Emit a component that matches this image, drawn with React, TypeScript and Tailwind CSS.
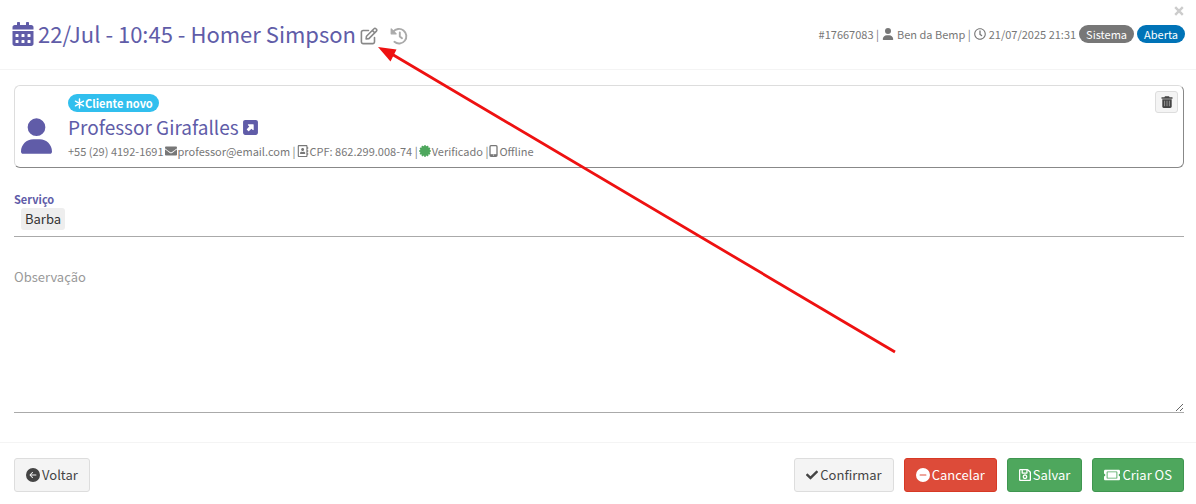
import { useState } from "react";
import {
  FaCalendarAlt,
  FaCheck,
  FaEnvelope,
  FaRegAddressBook,
  FaRegClock,
  FaRegSave,
  FaTicketAlt,
} from "react-icons/fa";
import { FaSquareUpRight, FaUser } from "react-icons/fa6";
import { BsArrowLeftCircleFill, BsDashCircleFill } from "react-icons/bs";

const BUTTON_STYLES = {
  default: "border-[#ddd] bg-[#f4f4f4] text-[#444]",
  danger: "border-[#d73925] bg-[#dd4b39] text-white",
  success: "border-[#3f9650] bg-[#4ea75d] text-white",
};

// ângulos das pontas do selo de verificado
const SEAL_ANGLES = [0, 30, 60, 90, 120, 150, 180, 210, 240, 270, 300, 330];

interface ActionButtonProps {
  variant: keyof typeof BUTTON_STYLES;
  icon: React.ReactNode;
  label: string;
}

function ActionButton({ variant, icon, label }: ActionButtonProps) {
  return (
    <button
      type="button"
      className={`flex h-[34px] items-center gap-0.5 rounded-[3px] border px-[11px] text-[13px] leading-5 ${BUTTON_STYLES[variant]}`}
    >
      {icon}
      {label}
    </button>
  );
}

function EditIcon() {
  return (
    <svg className="h-[18px] w-[18px]" viewBox="0 0 18 18" fill="none" stroke="currentColor" strokeWidth="1.6" strokeLinejoin="round" strokeLinecap="round">
      <path d="M8.5 3.5H3.2A1.8 1.8 0 0 0 1.4 5.300V14.800A1.800 1.800 0 0 0 3.200 16.600H12.700A1.800 1.800 0 0 0 14.500 14.800V10.500" />
      <path d="M6.500 9.200 14 1.700a1.300 1.300 0 0 1 1.900 0l.5.5a1.300 1.300 0 0 1 0 1.900L8.900 11.600 6.100 12ZM12.300 3.400l2.400 2.400" />
    </svg>
  );
}

function HistoryIcon() {
  return (
    <svg className="h-[18px] w-[18px]" viewBox="0 0 18 18" fill="none" stroke="currentColor" strokeWidth="1.9" strokeLinecap="round" strokeLinejoin="round">
      <path d="M3.200 4.800A7.300 7.300 0 1 1 4.400 14.800" />
      <path d="M9.800 5.500V9.500L12 11.200" />
      <path d="M1.200 1.800V6.800H6.200Z" fill="currentColor" strokeWidth="1.200" />
    </svg>
  );
}

function AsteriskIcon() {
  return (
    <svg className="h-[11px] w-[11px]" viewBox="0 0 12 12" fill="none" stroke="currentColor" strokeWidth="1.6" strokeLinecap="round">
      <path d="M6 1v10M1.600 3.500l8.800 5M10.400 3.500l-8.800 5" />
    </svg>
  );
}

function SealIcon() {
  return (
    <svg className="h-3 w-3 text-[#4ea75d]" viewBox="0 0 12 12" fill="currentColor">
      <circle cx="6" cy="6" r="5" />
      {SEAL_ANGLES.map((angle) => (
        <circle key={angle} cx="6" cy="1" r=".95" transform={`rotate(${angle} 6 6)`} />
      ))}
    </svg>
  );
}

function MobileIcon() {
  return (
    <svg className="h-3 w-[9px]" viewBox="0 0 9 12" fill="none" stroke="currentColor">
      <rect x="1" y=".7" width="7" height="10.600" rx="1" strokeWidth="1.300" />
      <path d="M1 9.200h7v1.800H1z" fill="currentColor" stroke="none" />
      <circle cx="4.500" cy="10" r=".6" fill="#fff" stroke="none" />
    </svg>
  );
}

function TrashIcon() {
  return (
    <svg className="h-3 w-3" viewBox="0 0 12 12" fill="currentColor">
      <path d="M4 .2h4l.6 1H11.500v1.500H.5V1.200h2.900zM1.300 3.300h9.400v7.200c0 .8-.6 1.400-1.400 1.400H2.700c-.8 0-1.400-.6-1.400-1.400z" />
      <path d="M3.600 4.700v5.500M6 4.700v5.500M8.400 4.700v5.500" stroke="#aaa" strokeWidth=".8" />
    </svg>
  );
}

export default function App() {
  const [note, setNote] = useState("");

  return (
    <main className="relative bg-white font-['Noto_Sans_CJK_SC','Open_Sans',sans-serif] text-[#777]">
      {/* Cabeçalho */}
      <header className="border-b border-[#f4f4f4] pr-[11px] pl-3">
        <div className="flex h-[19px] items-end justify-end pb-[3px]">
          <button type="button" aria-label="Fechar" className="px-px text-[#ccc]">
            <svg className="h-2.5 w-2.5" viewBox="0 0 10 10" stroke="currentColor" strokeWidth="2.400">
              <path d="M1.200 1.200l7.600 7.600M8.800 1.200L1.200 8.800" />
            </svg>
          </button>
        </div>
        <div className="flex items-center justify-between pb-[21px]">
          <div className="flex items-center">
            <h1 className="flex items-center gap-1 text-[22px] leading-[29px] text-[#605ca8]">
              <FaCalendarAlt className="h-6 w-[22px]" />
              22/Jul - 10:45 - Homer Simpson
            </h1>
            <div className="flex gap-3 pt-1 pl-1">
              <button type="button" aria-label="Editar" className="text-[#888]">
                <EditIcon />
              </button>
              <button type="button" aria-label="Histórico" className="text-[#aaa]">
                <HistoryIcon />
              </button>
            </div>
          </div>
          <div className="flex items-center gap-[3px] text-[11px] leading-4">
            <span>#17667083 |</span>
            <FaUser className="h-3 w-3" />
            <span>Ben da Bemp |</span>
            <FaRegClock className="h-3 w-3" />
            <span>21/07/2025 21:31</span>
            <span className="rounded-full bg-[#777] px-[7px] py-px text-white">Sistema</span>
            <span className="rounded-full bg-[#0073b7] px-[7px] py-px text-white">Aberta</span>
          </div>
        </div>
      </header>

      <div className="pt-[15px] pr-3 pb-[29px] pl-3.5">
        {/* Cliente */}
        <section className="flex items-start justify-between rounded-md border border-t-[#ddd] border-r-[#888] border-b-[#888] border-l-[#ddd] p-[5px]">
          <div className="flex items-end gap-4 pt-[3px] pb-0.5 pl-px">
            <FaUser className="mb-1.5 h-9 w-[31px] text-[#605ca8]" />
            <div className="flex flex-col items-start">
              <span className="flex items-center rounded-full bg-[#31bfee] px-1.5 text-[11px] leading-[18px] font-bold text-white">
                <AsteriskIcon />
                Cliente novo
              </span>
              <h2 className="flex items-center gap-1 text-[19px] leading-[30px] text-[#605ca8]">
                Professor Girafalles
                <a href="#cliente" aria-label="Abrir cliente">
                  <FaSquareUpRight className="h-[17px] w-[15px]" />
                </a>
              </h2>
              <p className="flex items-center gap-px text-[11px] leading-[18px]">
                <span>+55 (29) 4192-1691</span>
                <FaEnvelope className="h-3 w-3" />
                <span>professor@email.com |</span>
                <FaRegAddressBook className="h-3 w-3" />
                <span>CPF: 862.299.008-74 |</span>
                <SealIcon />
                <span>Verificado |</span>
                <MobileIcon />
                <span>Offline</span>
              </p>
            </div>
          </div>
          <button
            type="button"
            aria-label="Remover cliente"
            className="flex h-[22px] w-[23px] items-center justify-center rounded-[3px] border border-[#ddd] bg-[#f4f4f4] text-[#444]"
          >
            <TrashIcon />
          </button>
        </section>

        {/* Serviço */}
        <section className="mt-[22px] flex flex-col items-start border-b border-[#aaa] pb-1.5">
          <h3 className="text-[11px] leading-[18px] font-bold text-[#605ca8]">Serviço</h3>
          <span className="ml-[7px] rounded-[3px] bg-[#eee] px-1 text-[13px] leading-[22px] text-[#333]">Barba</span>
        </section>

        {/* Observação */}
        <textarea
          aria-label="Observação"
          placeholder="Observação"
          value={note}
          onChange={(e) => setNote(e.target.value)}
          className="mt-[30px] block h-[146px] w-full resize-y border-b border-[#aaa] text-[13px] leading-5 text-[#333] outline-none placeholder:text-[#999]"
        />
      </div>

      {/* Ações */}
      <footer className="flex items-center justify-between border-t border-[#f4f4f4] pt-[15px] pr-3 pb-3 pl-3.5">
        <ActionButton variant="default" icon={<BsArrowLeftCircleFill className="h-3.5 w-3.5" />} label="Voltar" />
        <div className="flex gap-2.5">
          <ActionButton variant="default" icon={<FaCheck className="h-3 w-3" />} label="Confirmar" />
          <ActionButton variant="danger" icon={<BsDashCircleFill className="h-3.5 w-3.5" />} label="Cancelar" />
          <ActionButton variant="success" icon={<FaRegSave className="h-3.5 w-3" />} label="Salvar" />
          <ActionButton variant="success" icon={<FaTicketAlt className="h-4 w-4" />} label="Criar OS" />
        </div>
      </footer>

      {/* Seta que aponta para o botão de editar */}
      <svg className="pointer-events-none absolute top-0 left-0" width="900" height="360" viewBox="0 0 900 360">
        <path d="M390 53L895 352" stroke="#ee1111" strokeWidth="2.800" />
        <path d="M378 47L396.500 49.500L390.500 61.500Z" fill="#ee1111" />
      </svg>
    </main>
  );
}
